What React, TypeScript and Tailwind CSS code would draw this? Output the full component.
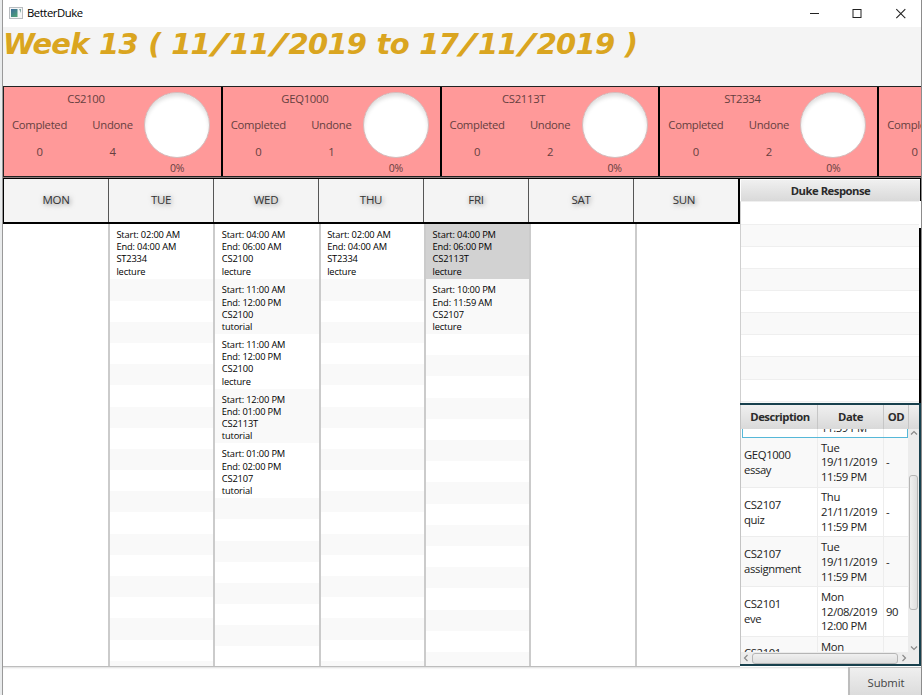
import React from "react";

const SANS = "font-['Open_Sans','Noto_Sans',sans-serif]";

type Module = { code: string; done: number; undone: number };

const modules: Module[] = [
  { code: "CS2100", done: 0, undone: 4 },
  { code: "GEQ1000", done: 0, undone: 1 },
  { code: "CS2113T", done: 0, undone: 2 },
  { code: "ST2334", done: 0, undone: 2 },
  { code: "", done: 0, undone: 2 },
];

type Item = { start: string; end: string; code: string; kind: string; selected?: boolean };

const week: { day: string; items: Item[] }[] = [
  { day: "MON", items: [] },
  { day: "TUE", items: [{ start: "02:00 AM", end: "04:00 AM", code: "ST2334", kind: "lecture" }] },
  {
    day: "WED",
    items: [
      { start: "04:00 AM", end: "06:00 AM", code: "CS2100", kind: "lecture" },
      { start: "11:00 AM", end: "12:00 PM", code: "CS2100", kind: "tutorial" },
      { start: "11:00 AM", end: "12:00 PM", code: "CS2100", kind: "lecture" },
      { start: "12:00 PM", end: "01:00 PM", code: "CS2113T", kind: "tutorial" },
      { start: "01:00 PM", end: "02:00 PM", code: "CS2107", kind: "tutorial" },
    ],
  },
  { day: "THU", items: [{ start: "02:00 AM", end: "04:00 AM", code: "ST2334", kind: "lecture" }] },
  {
    day: "FRI",
    items: [
      { start: "04:00 PM", end: "06:00 PM", code: "CS2113T", kind: "lecture", selected: true },
      { start: "10:00 PM", end: "11:59 AM", code: "CS2107", kind: "lecture" },
    ],
  },
  { day: "SAT", items: [] },
  { day: "SUN", items: [] },
];

const deadlines = [
  { desc: ["GEQ1000", "essay"], date: ["Tue", "19/11/2019", "11:59 PM"], od: "-" },
  { desc: ["CS2107", "quiz"], date: ["Thu", "21/11/2019", "11:59 PM"], od: "-" },
  { desc: ["CS2107", "assignment"], date: ["Tue", "19/11/2019", "11:59 PM"], od: "-" },
  { desc: ["CS2101", "eve"], date: ["Mon", "12/08/2019", "12:00 PM"], od: "90" },
  { desc: ["CS2101"], date: ["Mon"], od: "" },
];

function TitleBar() {
  return (
    <div className="flex h-[27px] shrink-0 items-center bg-white">
      <svg className="mb-[2px] ml-[6px] shrink-0" width="14" height="12" viewBox="0 0 14 12">
        <defs>
          <linearGradient id="app" x1="0" y1="0" x2="0.6" y2="1">
            <stop offset="0" stopColor="#3c6a9c" />
            <stop offset="1" stopColor="#4c9d78" />
          </linearGradient>
        </defs>
        <rect x="0.5" y="0.5" width="13" height="11" fill="#f4f6f7" stroke="#b9bdc0" />
        <rect x="2" y="2" width="6.5" height="8" fill="url(#app)" />
        <path d="M10 2h2v4z" fill="#7da7a0" />
      </svg>
      <span className="mb-[2px] ml-[4px] text-[11.3px] leading-4 tracking-[-0.45px] text-black">BetterDuke</span>
      <svg className="mb-[2px] ml-auto mr-[14px]" width="98" height="12" viewBox="0 0 98 12" fill="none" stroke="#222">
        <path d="M1 6.5h9" />
        <rect x="44" y="2.5" width="8" height="8" />
        <path d="M87.3 2.2l9 9M96.3 2.2l-9 9" strokeWidth="1.1" />
      </svg>
    </div>
  );
}

function WeekTitle() {
  const parts = "Week 13 ( 11/11/2019 to 17/11/2019 )".split(/(\/)/);
  return (
    <div className="h-[59px] shrink-0 whitespace-nowrap bg-[#f4f4f4] font-['DejaVu_Sans',sans-serif] text-[29px] font-bold italic leading-[35px] tracking-[-0.75px] word-spacing-normal text-[#daa520] [word-spacing:1px]">
      {parts.map((p, i) =>
        p === "/" ? (
          <span key={i} className="mx-[5px] inline-block scale-x-[1.5]">
            /
          </span>
        ) : (
          <span key={i}>{p}</span>
        ),
      )}
    </div>
  );
}

function ModuleCard({ m }: { m: Module }) {
  return (
    <div className="flex h-full w-[218.8px] shrink-0 border-r-2 border-black bg-[#ff9999] text-[11.3px] leading-4 tracking-[-0.3px] text-[#663f3f]">
      <div className="-ml-px w-[140px] shrink-0 pt-[4px]">
        <div className="h-4 pl-[26px] text-center">{m.code}</div>
        <div className="mt-[10px] flex">
          <div className="w-[73px] shrink-0 text-center">Completed</div>
          <div className="w-[73px] shrink-0 text-center">Undone</div>
        </div>
        <div className="mt-[11px] flex">
          <div className="w-[73px] shrink-0 text-center">{m.done}</div>
          <div className="w-[73px] shrink-0 text-center">{m.undone}</div>
        </div>
      </div>
      <div className="flex w-[68px] flex-col items-center pt-[5px]">
        <div className="size-[66px] shrink-0 rounded-full border border-[#d3bcbc] bg-white shadow-[inset_0_4px_4px_-1px_#dcdcdc]" />
        <div className="mt-[2px] text-[10.5px]">0%</div>
      </div>
    </div>
  );
}

function DayColumn({ items, index }: { items: Item[]; index: number }) {
  const fillers = items.length === 0 ? 0 : 22;
  const width =
    index === 0
      ? "w-[106.9px] border-r-2 border-[#cbcbcb]"
      : index === 6
        ? "flex-1"
        : "w-[105.4px] shrink-0 border-r-2 border-[#cbcbcb]";
  return (
    <div className={`flex h-full flex-col overflow-hidden bg-white ${width}`}>
      {items.map((it, i) => (
        <div
          key={i}
          className={`shrink-0 pl-[6.5px] pt-[5px] text-[9.3px] leading-[12.2px] tracking-[-0.16px] text-black ${
            i === 0 ? "h-[55.4px]" : "h-[54.7px]"
          } ${it.selected ? "bg-[#d2d2d2]" : i % 2 ? "bg-[#f9f9f9]" : "bg-white"}`}
        >
          <div>Start: {it.start}</div>
          <div>End: {it.end}</div>
          <div>{it.code}</div>
          <div>{it.kind}</div>
        </div>
      ))}
      {Array.from({ length: fillers }, (_, i) => (
        <div
          key={i}
          className={`h-[21.2px] shrink-0 ${(i + items.length) % 2 ? "bg-[#f9f9f9]" : "bg-white"}`}
        />
      ))}
    </div>
  );
}

function Schedule() {
  return (
    <div className="flex w-[737px] shrink-0 flex-col">
      <div className="flex h-[46px] shrink-0 border-b-2 border-l border-r-2 border-t border-black bg-[#f4f4f4]">
        {week.map((d, i) => (
          <div
            key={d.day}
            className={`flex items-center justify-center pb-px text-[11.5px] tracking-[-0.3px] text-[#333] [text-shadow:1px_1px_5px_#777] ${
              i < 6 ? "w-[105px] shrink-0 border-r border-[#555]" : "flex-1 pr-1"
            }`}
          >
            {d.day}
          </div>
        ))}
      </div>
      <div className="flex h-[443px] shrink-0 border-b border-[#bdbdbd] bg-white">
        {week.map((d, i) => (
          <DayColumn key={d.day} items={d.items} index={i} />
        ))}
      </div>
    </div>
  );
}

const head =
  "flex items-center justify-center bg-linear-to-b from-[#f0f0f0] to-[#d9d9d9] font-bold text-[11.3px] tracking-[-0.5px] text-[#2b2b2b]";

function Chevron({ d }: { d: string }) {
  return (
    <svg width="8" height="8" viewBox="0 0 8 8" fill="none" stroke="#8a8a8a" strokeWidth="1.2">
      <path d={d} />
    </svg>
  );
}

function ResponsePanel() {
  return (
    <div className="flex h-[225px] shrink-0 flex-col border-t border-black">
      <div className="flex h-[22px] shrink-0 border-r border-black">
        <div className={`${head} flex-1 border-l border-t border-white pt-[2px]`}>Duke Response</div>
      </div>
      <div className="flex min-h-0 flex-1">
        <div className="flex-1 overflow-hidden border-l border-t border-[#cfcfcf] border-t-[#efefef]">
          {Array.from({ length: 10 }, (_, i) => (
            <div
              key={i}
              className={`h-[22.15px] border-b border-[#efefef] ${i === 0 ? "mt-[0.5px]" : ""} ${
                i % 2 ? "bg-[#f9f9f9]" : "bg-white"
              }`}
            />
          ))}
        </div>
        <div className="mt-[27px] w-[2px] bg-black" />
      </div>
    </div>
  );
}

function DeadlineTable() {
  return (
    <div className="flex h-[263px] shrink-0 flex-col border-b-2 border-r-2 border-t-2 border-[#17404d] bg-white">
      <div className="flex h-[24px] shrink-0 border-l border-[#c4c4c4]">
        <div className={`${head} w-[77px] border-r border-[#c6c6c6] pl-[2px]`}>Description</div>
        <div className={`${head} w-[66px] border-r border-[#c6c6c6]`}>Date</div>
        <div className={`${head} w-[25px] border-r border-[#c6c6c6]`}>OD</div>
        <div className={`${head} flex-1`} />
      </div>
      <div className="flex min-h-0 flex-1 border-l border-[#c4c4c4]">
        <div className="flex flex-1 flex-col overflow-hidden text-[11.3px] leading-[14.8px] tracking-[-0.38px] text-[#222]">
          <div className="ml-px flex h-[9px] shrink-0 items-end overflow-hidden border-b border-l border-r border-[#56b8d8]">
            <div className="w-[75px] self-stretch border-r border-[#ededed]" />
            <div className="h-full w-[66px] overflow-hidden border-r border-[#ededed] pl-[3px]">
              <div className="-mt-[8px]">11:59 PM</div>
            </div>
          </div>
          {deadlines.map((r, i) => (
            <div
              key={i}
              className={`flex h-[49.7px] shrink-0 items-center border-b border-[#ededed] ${
                i % 2 ? "bg-white" : "bg-[#f9f9f9]"
              }`}
            >
              <div
                className={`flex h-full w-[77px] flex-col border-r border-[#ededed] pl-[3px] ${
                  r.desc.length > 1 ? "justify-center pt-px" : "pt-[9px]"
                }`}
              >
                {r.desc.map((t) => (
                  <div key={t}>{t}</div>
                ))}
              </div>
              <div
                className={`flex h-full w-[66px] flex-col border-r border-[#ededed] pl-[3px] ${
                  r.date.length > 1 ? "justify-center pt-px" : "pt-[3px]"
                }`}
              >
                {r.date.map((t) => (
                  <div key={t}>{t}</div>
                ))}
              </div>
              <div className="pl-[2px] pt-px">{r.od}</div>
            </div>
          ))}
        </div>
        <div className="flex w-[11px] shrink-0 flex-col items-center bg-[#ececec]">
          <Chevron d="M1 5.5l3-3 3 3" />
          <div className="mt-[38px] h-[135px] w-[9px] rounded-[3px] border border-[#b5b5b5] bg-linear-to-r from-[#f0f0f0] to-[#dedede]" />
          <div className="mt-[34px]">
            <Chevron d="M1 2.5l3 3 3-3" />
          </div>
        </div>
      </div>
      <div className="flex h-[12px] shrink-0 items-center border-l border-[#c4c4c4] bg-[#ececec] pl-px">
        <Chevron d="M5.5 1l-3 3 3 3" />
        <div className="ml-[2px] h-[11px] w-[146px] rounded-[3px] border border-[#b5b5b5] bg-linear-to-b from-[#f0f0f0] to-[#dedede]" />
        <div className="ml-[2px]">
          <Chevron d="M2.5 1l3 3-3 3" />
        </div>
      </div>
    </div>
  );
}

export default function App() {
  return (
    <div className={`flex h-[695px] w-[922px] overflow-hidden bg-[#e9ebec] ${SANS}`}>
      <div className="ml-[2px] box-content flex w-[918px] shrink-0 flex-col overflow-hidden border-l border-[#999] bg-white">
        <TitleBar />
        <WeekTitle />
        <div className="flex h-[91px] shrink-0 overflow-hidden border-b border-l border-t-[1.5px] border-[#222]">
          {modules.map((m, i) => (
            <ModuleCard key={i} m={m} />
          ))}
        </div>
        <div className="h-px shrink-0 bg-[#8a7a7a]" />
        <div className="flex h-[489px] shrink-0">
          <Schedule />
          <div className="flex min-w-0 flex-1 flex-col">
            <ResponsePanel />
            <DeadlineTable />
          </div>
        </div>
        <div className="flex min-h-0 flex-1">
          <div className="flex-1 bg-white shadow-[inset_0_2px_2px_-1px_#ddd]" />
          <div className="flex w-[73px] items-center justify-center border-l-2 border-t border-[#bdbdbd] bg-linear-to-b from-[#efefef] to-[#dcdcdc] pl-px pt-[3px] text-[11.3px] tracking-[-0.1px] text-[#444]">
            Submit
          </div>
        </div>
      </div>
      <div className="w-px bg-[#8c8c8c]" />
    </div>
  );
}
